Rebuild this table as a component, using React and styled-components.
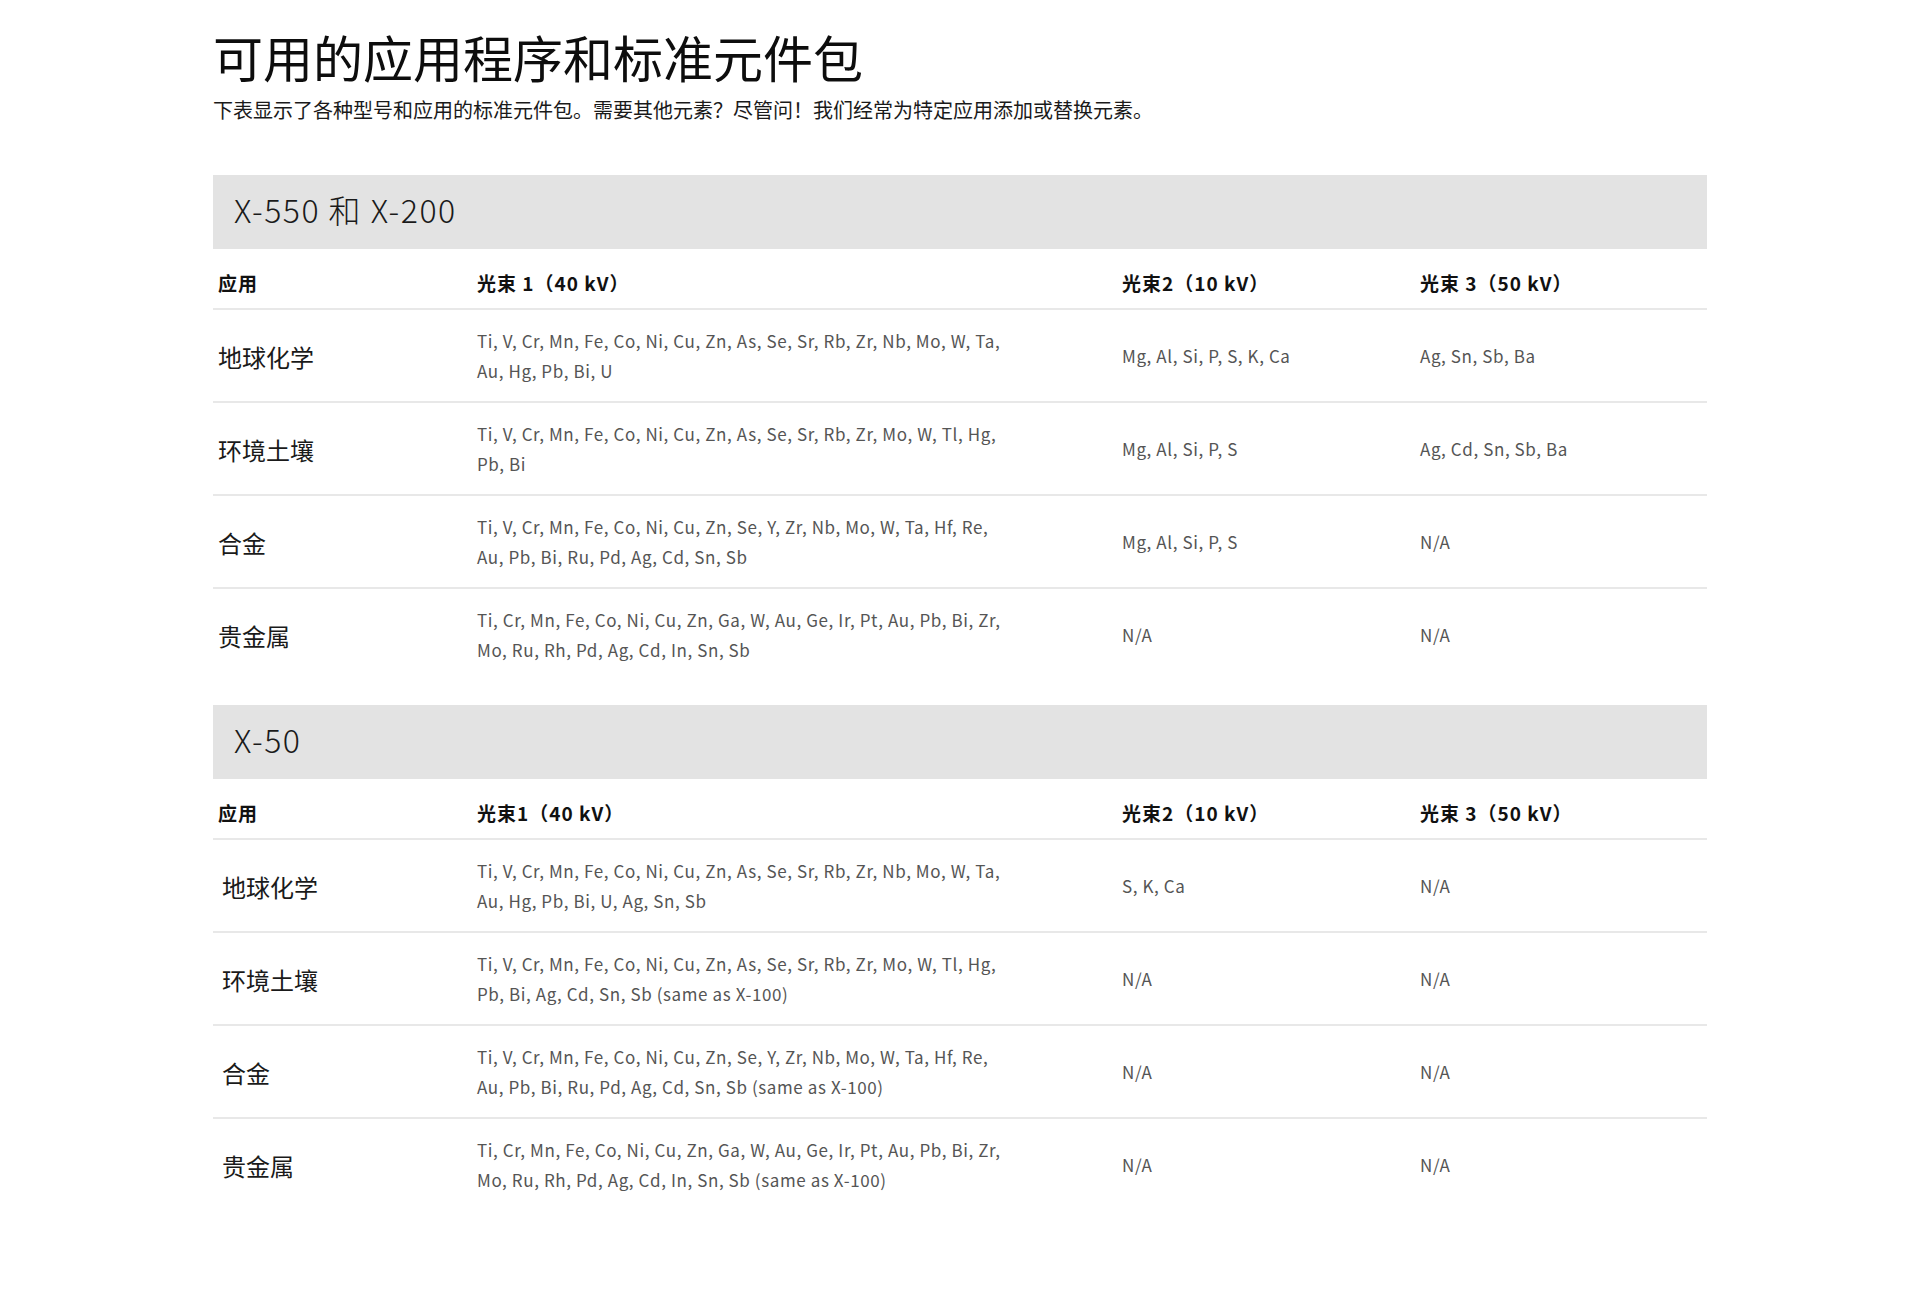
import React from "react";
import styled, { createGlobalStyle } from "styled-components";

const GlobalStyle = createGlobalStyle`
  html, body {
    margin: 0;
    padding: 0;
    background: #ffffff;
  }
  body {
    font-family: "Noto Sans CJK SC", "Noto Sans", "Liberation Sans", sans-serif;
    color: #111111;
  }
`;

const Page = styled.main`
  width: 1494px;
  margin: 0 auto;
  padding: 26px 0 60px;
`;

const Title = styled.h1`
  margin: 0;
  font-size: 50px;
  line-height: 60px;
  font-weight: 400;
  color: #0d0d0d;
  letter-spacing: 0;
`;

const Lead = styled.p`
  margin: 9px 0 0;
  font-size: 20px;
  line-height: 30px;
  color: #1a1a1a;
`;

const Sections = styled.div`
  margin-top: 50px;
  display: flex;
  flex-direction: column;
  gap: 23px;
`;

const Section = styled.section`
  display: flex;
  flex-direction: column;
`;

const Band = styled.h2`
  margin: 0;
  height: 74px;
  box-sizing: border-box;
  display: flex;
  align-items: center;
  padding: 0 0 7px 21px;
  background: #e3e3e3;
  font-size: 32px;
  font-weight: 300;
  letter-spacing: 1.5px;
  color: #1a1a1a;
`;

const Row = styled.div`
  display: grid;
  grid-template-columns: 259px 645px 298px 1fr;
  align-items: center;
  min-height: ${(p) => (p.$head ? "59px" : "91px")};
  border-bottom: ${(p) => (p.$last ? "2px solid transparent" : "2px solid #e8e8e8")};
`;

const HeadCell = styled.div`
  padding: 21px 6px 12px 5px;
  font-size: 19px;
  line-height: 26px;
  font-weight: 700;
  letter-spacing: 1px;
  color: #111111;
  align-self: stretch;
`;

const Label = styled.div`
  padding-left: ${(p) => (p.$indent ? "9px" : "5px")};
  font-size: 24px;
  line-height: 32px;
  color: #1a1a1a;
  transform: translateY(1px);
`;

const Data = styled.div`
  padding: 0 6px 0 5px;
  font-size: 17px;
  line-height: 30px;
  letter-spacing: 0.6px;
  color: #555555;
`;

const sections = [
  {
    name: "X-550 和 X-200",
    heads: ["应用", "光束 1（40 kV）", "光束2（10 kV）", "光束 3（50 kV）"],
    indent: false,
    rows: [
      {
        app: "地球化学",
        b1: [
          "Ti, V, Cr, Mn, Fe, Co, Ni, Cu, Zn, As, Se, Sr, Rb, Zr, Nb, Mo, W, Ta,",
          "Au, Hg, Pb, Bi, U",
        ],
        b2: "Mg, Al, Si, P, S, K, Ca",
        b3: "Ag, Sn, Sb, Ba",
      },
      {
        app: "环境土壤",
        b1: [
          "Ti, V, Cr, Mn, Fe, Co, Ni, Cu, Zn, As, Se, Sr, Rb, Zr, Mo, W, Tl, Hg,",
          "Pb, Bi",
        ],
        b2: "Mg, Al, Si, P, S",
        b3: "Ag, Cd, Sn, Sb, Ba",
      },
      {
        app: "合金",
        b1: [
          "Ti, V, Cr, Mn, Fe, Co, Ni, Cu, Zn, Se, Y, Zr, Nb, Mo, W, Ta, Hf, Re,",
          "Au, Pb, Bi, Ru, Pd, Ag, Cd, Sn, Sb",
        ],
        b2: "Mg, Al, Si, P, S",
        b3: "N/A",
      },
      {
        app: "贵金属",
        b1: [
          "Ti, Cr, Mn, Fe, Co, Ni, Cu, Zn, Ga, W, Au, Ge, Ir, Pt, Au, Pb, Bi, Zr,",
          "Mo, Ru, Rh, Pd, Ag, Cd, In, Sn, Sb",
        ],
        b2: "N/A",
        b3: "N/A",
      },
    ],
  },
  {
    name: "X-50",
    heads: ["应用", "光束1（40 kV）", "光束2（10 kV）", "光束 3（50 kV）"],
    indent: true,
    rows: [
      {
        app: "地球化学",
        b1: [
          "Ti, V, Cr, Mn, Fe, Co, Ni, Cu, Zn, As, Se, Sr, Rb, Zr, Nb, Mo, W, Ta,",
          "Au, Hg, Pb, Bi, U, Ag, Sn, Sb",
        ],
        b2: "S, K, Ca",
        b3: "N/A",
      },
      {
        app: "环境土壤",
        b1: [
          "Ti, V, Cr, Mn, Fe, Co, Ni, Cu, Zn, As, Se, Sr, Rb, Zr, Mo, W, Tl, Hg,",
          "Pb, Bi, Ag, Cd, Sn, Sb (same as X-100)",
        ],
        b2: "N/A",
        b3: "N/A",
      },
      {
        app: "合金",
        b1: [
          "Ti, V, Cr, Mn, Fe, Co, Ni, Cu, Zn, Se, Y, Zr, Nb, Mo, W, Ta, Hf, Re,",
          "Au, Pb, Bi, Ru, Pd, Ag, Cd, Sn, Sb (same as X-100)",
        ],
        b2: "N/A",
        b3: "N/A",
      },
      {
        app: "贵金属",
        b1: [
          "Ti, Cr, Mn, Fe, Co, Ni, Cu, Zn, Ga, W, Au, Ge, Ir, Pt, Au, Pb, Bi, Zr,",
          "Mo, Ru, Rh, Pd, Ag, Cd, In, Sn, Sb (same as X-100)",
        ],
        b2: "N/A",
        b3: "N/A",
      },
    ],
  },
];

function Lines({ lines }) {
  return lines.map((l, i) => (
    <React.Fragment key={i}>
      {i > 0 && <br />}
      {l}
    </React.Fragment>
  ));
}

export default function App() {
  return (
    <>
      <GlobalStyle />
      <Page>
        <Title>可用的应用程序和标准元件包</Title>
        <Lead>
          下表显示了各种型号和应用的标准元件包。需要其他元素？尽管问！我们经常为特定应用添加或替换元素。
        </Lead>
        <Sections>
          {sections.map((s) => (
            <Section key={s.name}>
              <Band>{s.name}</Band>
              <Row $head>
                {s.heads.map((h) => (
                  <HeadCell key={h}>{h}</HeadCell>
                ))}
              </Row>
              {s.rows.map((r, i) => (
                <Row key={r.app} $last={i === s.rows.length - 1}>
                  <Label $indent={s.indent}>{r.app}</Label>
                  <Data>
                    <Lines lines={r.b1} />
                  </Data>
                  <Data>{r.b2}</Data>
                  <Data>{r.b3}</Data>
                </Row>
              ))}
            </Section>
          ))}
        </Sections>
      </Page>
    </>
  );
}
